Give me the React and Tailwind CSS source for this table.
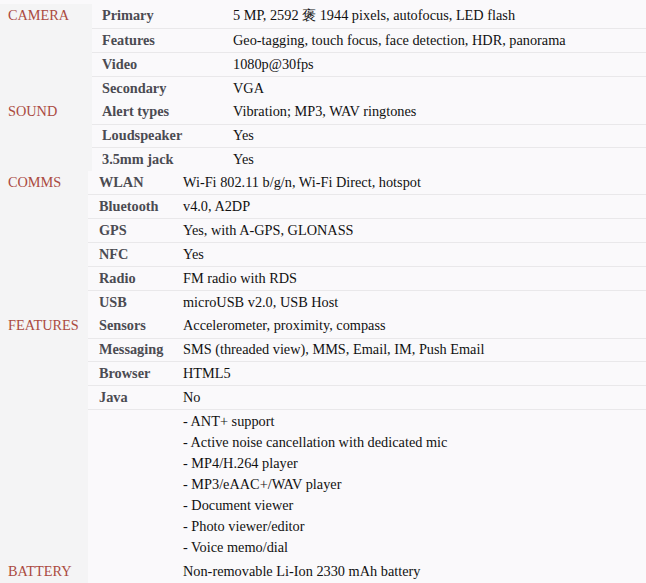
const sections = [
  {
    name: 'CAMERA',
    catW: 'w-[92px]',
    labelW: 'w-[133px] pl-[10px]',
    rowH: 'h-[24px]',
    rows: [
      ['Primary', '5 MP, 2592 \u8912 1944 pixels, autofocus, LED flash'],
      ['Features', 'Geo-tagging, touch focus, face detection, HDR, panorama'],
      ['Video', '1080p@30fps'],
      ['Secondary', 'VGA'],
    ],
  },
  {
    name: 'SOUND',
    catW: 'w-[92px]',
    labelW: 'w-[133px] pl-[10px]',
    rowH: 'h-[23.5px]',
    rows: [
      ['Alert types', 'Vibration; MP3, WAV ringtones'],
      ['Loudspeaker', 'Yes'],
      ['3.5mm jack', 'Yes'],
    ],
  },
  {
    name: 'COMMS',
    catW: 'w-[88px]',
    labelW: 'w-[87px] pl-[11px]',
    rowH: 'h-[23.9px]',
    rows: [
      ['WLAN', 'Wi-Fi 802.11 b/g/n, Wi-Fi Direct, hotspot'],
      ['Bluetooth', 'v4.0, A2DP'],
      ['GPS', 'Yes, with A-GPS, GLONASS'],
      ['NFC', 'Yes'],
      ['Radio', 'FM radio with RDS'],
      ['USB', 'microUSB v2.0, USB Host'],
    ],
  },
  {
    name: 'FEATURES',
    catW: 'w-[88px]',
    labelW: 'w-[87px] pl-[11px]',
    rowH: 'h-[23.75px]',
    rows: [
      ['Sensors', 'Accelerometer, proximity, compass'],
      ['Messaging', 'SMS (threaded view), MMS, Email, IM, Push Email'],
      ['Browser', 'HTML5'],
      ['Java', 'No'],
      [
        '',
        [
          '- ANT+ support',
          '- Active noise cancellation with dedicated mic',
          '- MP4/H.264 player',
          '- MP3/eAAC+/WAV player',
          '- Document viewer',
          '- Photo viewer/editor',
          '- Voice memo/dial',
        ],
      ],
    ],
  },
  {
    name: 'BATTERY',
    catW: 'w-[88px]',
    labelW: 'w-[87px] pl-[11px]',
    rowH: 'h-[23.5px]',
    rows: [['', 'Non-removable Li-Ion 2330 mAh battery']],
  },
];

const Section = ({ section }) => (
  <div className="flex">
    <div className={`${section.catW} shrink-0 bg-[#f4f4f5] pl-2`}>
      <div className={`${section.rowH} flex items-center text-[#ab4a3f]`}>{section.name}</div>
    </div>
    <div className="flex-1">
      {section.rows.map(([label, value], i) => {
        const list = Array.isArray(value);
        return (
          <div
            key={i}
            className={`flex items-center ${list ? 'pt-[1px] pb-[2px]' : section.rowH} ${i > 0 ? 'border-t border-[#e9e8ea]' : ''}`}
          >
            <div className={`${section.labelW} shrink-0 self-stretch flex items-center font-bold text-[#4b4b52]`}>
              {label}
            </div>
            {list ? (
              <div className="pl-2 leading-[21px] text-[#111]">
                {value.map((v) => (
                  <div key={v}>{v}</div>
                ))}
              </div>
            ) : (
              <div className="pl-2 text-[#111]">{value}</div>
            )}
          </div>
        );
      })}
    </div>
  </div>
);

export default function App() {
  return (
    <div className="w-[646px] h-[583px] overflow-hidden bg-[#faf9fb] pt-[4px] text-[14.3px] font-['Liberation_Serif',serif]">
      {sections.map((s) => (
        <Section key={s.name} section={s} />
      ))}
    </div>
  );
}
